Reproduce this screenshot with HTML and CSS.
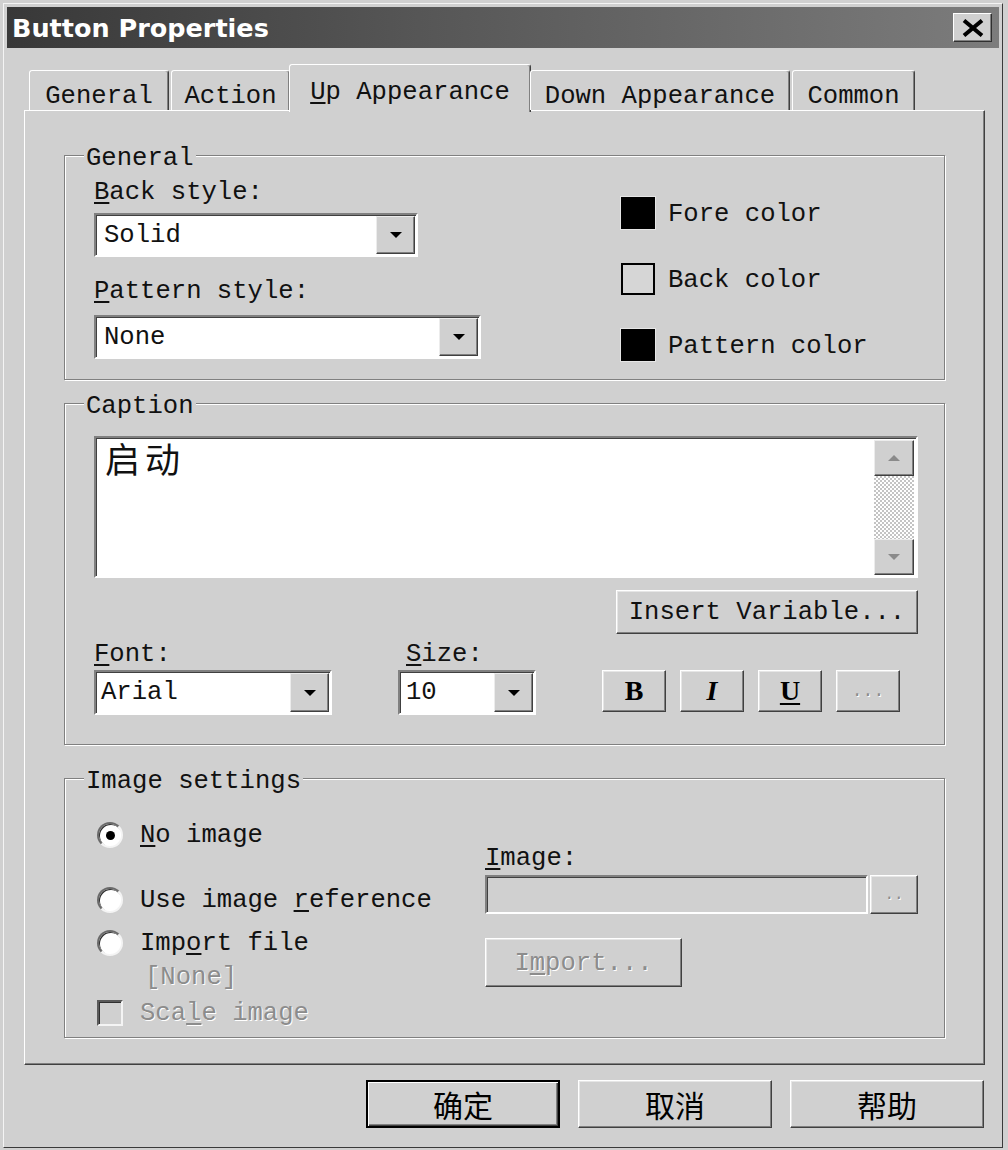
FILE: index.html
```html
<!DOCTYPE html>
<html lang="en">
<head>
<meta charset="utf-8">
<title>Button Properties</title>
<link rel="stylesheet" href="styles.css">
</head>
<body>
<div class="window">
  <div class="titlebar">
    <span class="title">Button Properties</span>
    <span class="close"><svg width="24" height="18" viewBox="0 0 24 18"><path d="M3 1.5 L21 16.5 M21 1.5 L3 16.5" stroke="#000" stroke-width="4" fill="none"/></svg></span>
  </div>
  <div class="content">
    <div class="tabs">
      <div class="tab t1">General</div>
      <div class="tab t2">Action</div>
      <div class="tab t3 active"><u>U</u>p Appearance</div>
      <div class="tab t4">Down Appearance</div>
      <div class="tab t5">Common</div>
    </div>
    <div class="panel">
      <div class="group g-general">
        <span class="legend">General</span>
        <div class="styles-col">
          <div class="label"><u>B</u>ack style:</div>
          <div class="combo c-solid"><span class="combo-text">Solid</span><span class="drop"><i class="tri-down"></i></span></div>
          <div class="label l-pattern"><u>P</u>attern style:</div>
          <div class="combo c-none"><span class="combo-text">None</span><span class="drop"><i class="tri-down"></i></span></div>
        </div>
        <div class="colors-col">
          <div class="color-row"><span class="swatch sw-black"></span><span class="color-name">Fore color</span></div>
          <div class="color-row"><span class="swatch sw-empty"></span><span class="color-name">Back color</span></div>
          <div class="color-row"><span class="swatch sw-black"></span><span class="color-name">Pattern color</span></div>
        </div>
      </div>

      <div class="group g-caption">
        <span class="legend">Caption</span>
        <div class="textarea">
          <div class="textarea-text">启动</div>
          <div class="scrollbar">
            <div class="sb-btn"><i class="tri-up gray"></i></div>
            <div class="sb-track"></div>
            <div class="sb-btn"><i class="tri-down gray"></i></div>
          </div>
        </div>
        <div class="insert-row">
          <div class="btn btn-insert">Insert Variable...</div>
        </div>
        <div class="font-row">
          <div class="font-col">
            <div class="label"><u>F</u>ont:</div>
            <div class="combo c-font"><span class="combo-text">Arial</span><span class="drop"><i class="tri-down"></i></span></div>
          </div>
          <div class="size-col">
            <div class="label l-size"><u>S</u>ize:</div>
            <div class="combo c-size"><span class="combo-text">10</span><span class="drop"><i class="tri-down"></i></span></div>
          </div>
          <div class="fmt-btns">
            <div class="btn fmt fmt-b">B</div>
            <div class="btn fmt fmt-i">I</div>
            <div class="btn fmt fmt-u"><u>U</u></div>
            <div class="btn fmt fmt-more disabled">...</div>
          </div>
        </div>
      </div>

      <div class="group g-image">
        <span class="legend">Image settings</span>
        <div class="radios-col">
          <div class="radio-row"><span class="radio checked"></span><span class="opt"><u>N</u>o image</span></div>
          <div class="radio-row r2"><span class="radio"></span><span class="opt">Use image <u>r</u>eference</span></div>
          <div class="radio-row r3"><span class="radio"></span><span class="opt">Imp<u>o</u>rt file</span></div>
          <div class="none-label disabled">[None]</div>
          <div class="radio-row check-row"><span class="checkbox"></span><span class="opt disabled">Sca<u>l</u>e image</span></div>
        </div>
        <div class="image-col">
          <div class="label"><u>I</u>mage:</div>
          <div class="img-field-row">
            <div class="img-field"></div>
            <div class="btn browse disabled">..</div>
          </div>
          <div class="btn btn-import disabled">I<u>m</u>port...</div>
        </div>
      </div>
    </div>
    <div class="footer">
      <div class="btn fbtn default">确定</div>
      <div class="btn fbtn">取消</div>
      <div class="btn fbtn">帮助</div>
    </div>
  </div>
</div>
</body>
</html>
```

FILE: styles.css
```css
* { box-sizing: border-box; }
html, body { margin: 0; padding: 0; }
body {
  background: #d0d0d0;
  width: 1008px;
  height: 1150px;
  overflow: hidden;
  font-family: "Liberation Mono", "DejaVu Sans Mono", monospace;
  font-size: 25.6px;
  line-height: 26px;
  color: #111;
}
u { text-decoration-thickness: 2px; text-underline-offset: 3px; }

.window {
  margin: 3px 0 0 3px;
  width: 1000px;
  height: 1145px;
  border: 1px solid;
  border-color: #f4f4f4 #3a3a3a #3a3a3a #f4f4f4;
  padding: 3px;
  background: #d0d0d0;
}
.titlebar {
  height: 41px;
  display: flex;
  align-items: center;
  justify-content: space-between;
  padding: 0 7px 0 5px;
  background: linear-gradient(to right, #383838, #555 40%, #7c7c7c);
}
.title {
  font-family: "DejaVu Sans", sans-serif;
  font-weight: bold;
  font-size: 25.5px;
  line-height: 30px;
  color: #fff;
}
.close {
  width: 39px;
  height: 29px;
  background: #d0d0d0;
  border: 1px solid;
  border-color: #fff #303030 #303030 #fff;
  box-shadow: inset -1px -1px #808080;
  display: flex;
  align-items: center;
  justify-content: center;
}

.content { padding: 16px 14px 0 17px; }

.tabs {
  height: 46px;
  display: flex;
  align-items: flex-end;
  gap: 2px;
  padding-left: 5px;
  position: relative;
  z-index: 1;
}
.tab {
  height: 40px;
  padding-top: 13px;
  text-align: center;
  white-space: nowrap;
  background: #d0d0d0;
  border: 1px solid;
  border-bottom: none;
  border-color: #fff #404040 transparent #fff;
  border-radius: 3px 3px 0 0;
  box-shadow: inset -1px 0 #808080;
}
.t1 { width: 140px; }
.t2 { width: 119px; }
.t3 { width: 236px; }
.t4 { width: 260px; }
.t5 { width: 123px; }
.tab.active {
  width: 242px;
  height: 48px;
  margin: 0 -3px -2px;
  padding-top: 15px;
}

.panel {
  height: 955px;
  border: 1px solid;
  border-color: #fff #404040 #404040 #fff;
  box-shadow: inset -1px -1px #808080;
  padding: 44px 39px 0 39px;
}

.group {
  position: relative;
  border: 1px solid #808080;
  box-shadow: inset 1px 1px #fff, 1px 1px #fff;
}
.legend {
  position: absolute;
  top: -10px;
  left: 19px;
  padding: 0 2px;
  background: #d0d0d0;
  line-height: 26px;
}
.label { height: 26px; padding-top: 2px; white-space: nowrap; }

/* General group */
.g-general {
  height: 225px;
  margin-bottom: 23px;
  display: grid;
  grid-template-columns: 527px 1fr;
  padding-left: 29px;
}
.styles-col { padding-top: 22px; }
.combo {
  display: flex;
  height: 44px;
  background: #fff;
  border: 2px solid;
  border-color: #808080 #fff #fff #808080;
  box-shadow: inset 1px 1px #404040;
}
.combo-text {
  flex: 1;
  padding: 2px 0 0 8px;
  line-height: 38px;
  white-space: nowrap;
}
.drop {
  width: 39px;
  margin: 1px 1px 1px 0;
  background: #d0d0d0;
  border: 1px solid;
  border-color: #ececec #404040 #404040 #ececec;
  box-shadow: inset -1px -1px #808080;
  display: flex;
  align-items: center;
  justify-content: center;
}
.tri-down {
  width: 0; height: 0;
  border-left: 6px solid transparent;
  border-right: 6px solid transparent;
  border-top: 6px solid #000;
}
.tri-up {
  width: 0; height: 0;
  border-left: 6px solid transparent;
  border-right: 6px solid transparent;
  border-bottom: 6px solid #000;
}
.tri-down.gray { border-top-color: #8a8a8a; }
.tri-up.gray { border-bottom-color: #8a8a8a; }
.c-solid { width: 324px; margin-top: 9px; }
.l-pattern { margin-top: 20px; }
.c-none { width: 387px; margin-top: 12px; }

.colors-col {
  padding-top: 41px;
  display: flex;
  flex-direction: column;
  gap: 34px;
}
.color-row {
  display: flex;
  align-items: center;
  gap: 13px;
  height: 32px;
  white-space: nowrap;
}
.color-name { padding-top: 3px; }
.swatch { width: 34px; height: 32px; flex: none; }
.sw-black { background: #000; box-shadow: 0 0 0 1px #e6e6e6; }
.sw-empty { background: #d6d6d6; border: 2px solid #000; }

/* Caption group */
.g-caption {
  height: 342px;
  margin-bottom: 33px;
  padding: 32px 26px 0 29px;
}
.textarea {
  height: 142px;
  display: flex;
  background: #fff;
  border: 2px solid;
  border-color: #808080 #fff #fff #808080;
  box-shadow: inset 1px 1px #404040;
}
.textarea-text {
  flex: 1;
  padding-left: 9px;
  font-family: "Noto Sans CJK SC", sans-serif;
  font-size: 35px;
  line-height: 40px;
  letter-spacing: 5px;
}
.scrollbar {
  width: 40px;
  margin-right: 2px;
  padding: 2px 0 1px;
  display: flex;
  flex-direction: column;
}
.sb-btn {
  height: 36px;
  background: #d0d0d0;
  border: 1px solid;
  border-color: #ececec #404040 #404040 #ececec;
  box-shadow: inset -1px -1px #808080;
  display: flex;
  align-items: center;
  justify-content: center;
}
.sb-track {
  flex: 1;
  background-color: #fff;
  background-image: repeating-conic-gradient(#c4c4c4 0 25%, #fff 0 50%);
  background-size: 4px 4px;
}

.btn {
  background: #d0d0d0;
  border: 1px solid;
  border-color: #fff #404040 #404040 #fff;
  box-shadow: inset -1px -1px #808080, inset 1px 1px #e6e6e6;
  display: flex;
  align-items: center;
  justify-content: center;
  white-space: nowrap;
}
.insert-row {
  display: flex;
  justify-content: flex-end;
  margin-top: 12px;
}
.btn-insert { width: 302px; height: 44px; padding-top: 2px; }

.font-row {
  display: flex;
  gap: 66px;
  margin-top: 6px;
}
.font-col { width: 238px; }
.size-col { width: 138px; }
.font-row .combo { height: 45px; margin-top: 4px; }
.c-font .combo-text { padding-left: 5px; }
.c-size .combo-text { padding-left: 6px; }
.l-size { padding-left: 8px; }
.fmt-btns {
  display: flex;
  gap: 14px;
  margin-top: 30px;
}
.fmt {
  width: 64px;
  height: 42px;
  font-family: "Liberation Serif", serif;
  font-weight: bold;
  font-size: 28px;
  color: #000;
}
.fmt-i { font-style: italic; }
.fmt-more { font-family: "Liberation Mono", monospace; font-weight: normal; font-size: 18px; }

.disabled { color: #8c8c8c; text-shadow: 1px 1px 0 #fff; }

/* Image settings group */
.g-image {
  height: 260px;
  display: grid;
  grid-template-columns: 388px 1fr;
  padding-left: 32px;
}
.radios-col { padding-top: 43px; }
.radio-row {
  display: flex;
  align-items: center;
  gap: 17px;
  height: 26px;
  white-space: nowrap;
}
.opt { padding-top: 2px; }
.r2 { margin-top: 39px; }
.r3 { margin-top: 17px; }
.radio {
  position: relative;
  width: 26px;
  height: 26px;
  flex: none;
  border-radius: 50%;
  background: #fff;
  border: 2px solid;
  border-color: #6a6a6a #f4f4f4 #f4f4f4 #6a6a6a;
  box-shadow: inset 1px 1px #303030;
}
.radio.checked::after {
  content: "";
  position: absolute;
  left: 7px;
  top: 7px;
  width: 9px;
  height: 9px;
  border-radius: 50%;
  background: #000;
}
.none-label { margin-top: 7px; padding: 2px 0 0 48px; height: 26px; }
.check-row { margin-top: 11px; }
.checkbox {
  width: 26px;
  height: 26px;
  flex: none;
  background: #d0d0d0;
  border: 2px solid;
  border-color: #5a5a5a #f4f4f4 #f4f4f4 #5a5a5a;
  box-shadow: inset 1px 1px #303030;
}

.image-col { padding-top: 65px; }
.img-field-row {
  display: flex;
  gap: 2px;
  margin-top: 5px;
  height: 39px;
}
.img-field {
  width: 383px;
  background: #d0d0d0;
  border: 2px solid;
  border-color: #808080 #fff #fff #808080;
  box-shadow: inset 1px 1px #404040;
}
.browse { width: 48px; font-size: 16px; }
.btn-import { width: 197px; height: 49px; margin-top: 24px; padding-top: 2px; }

/* Footer */
.footer {
  display: flex;
  justify-content: flex-end;
  gap: 18px;
  margin-top: 15px;
  padding-right: 1px;
}
.fbtn {
  width: 194px;
  height: 48px;
  font-family: "Noto Sans CJK SC", sans-serif;
  font-size: 30px;
  line-height: 40px;
  color: #000;
}
.fbtn.default {
  border: 2px solid;
  border-color: #000;
  box-shadow: inset 1px 1px #fff, inset -1px -1px #404040, inset -2px -2px #808080;
}
```
